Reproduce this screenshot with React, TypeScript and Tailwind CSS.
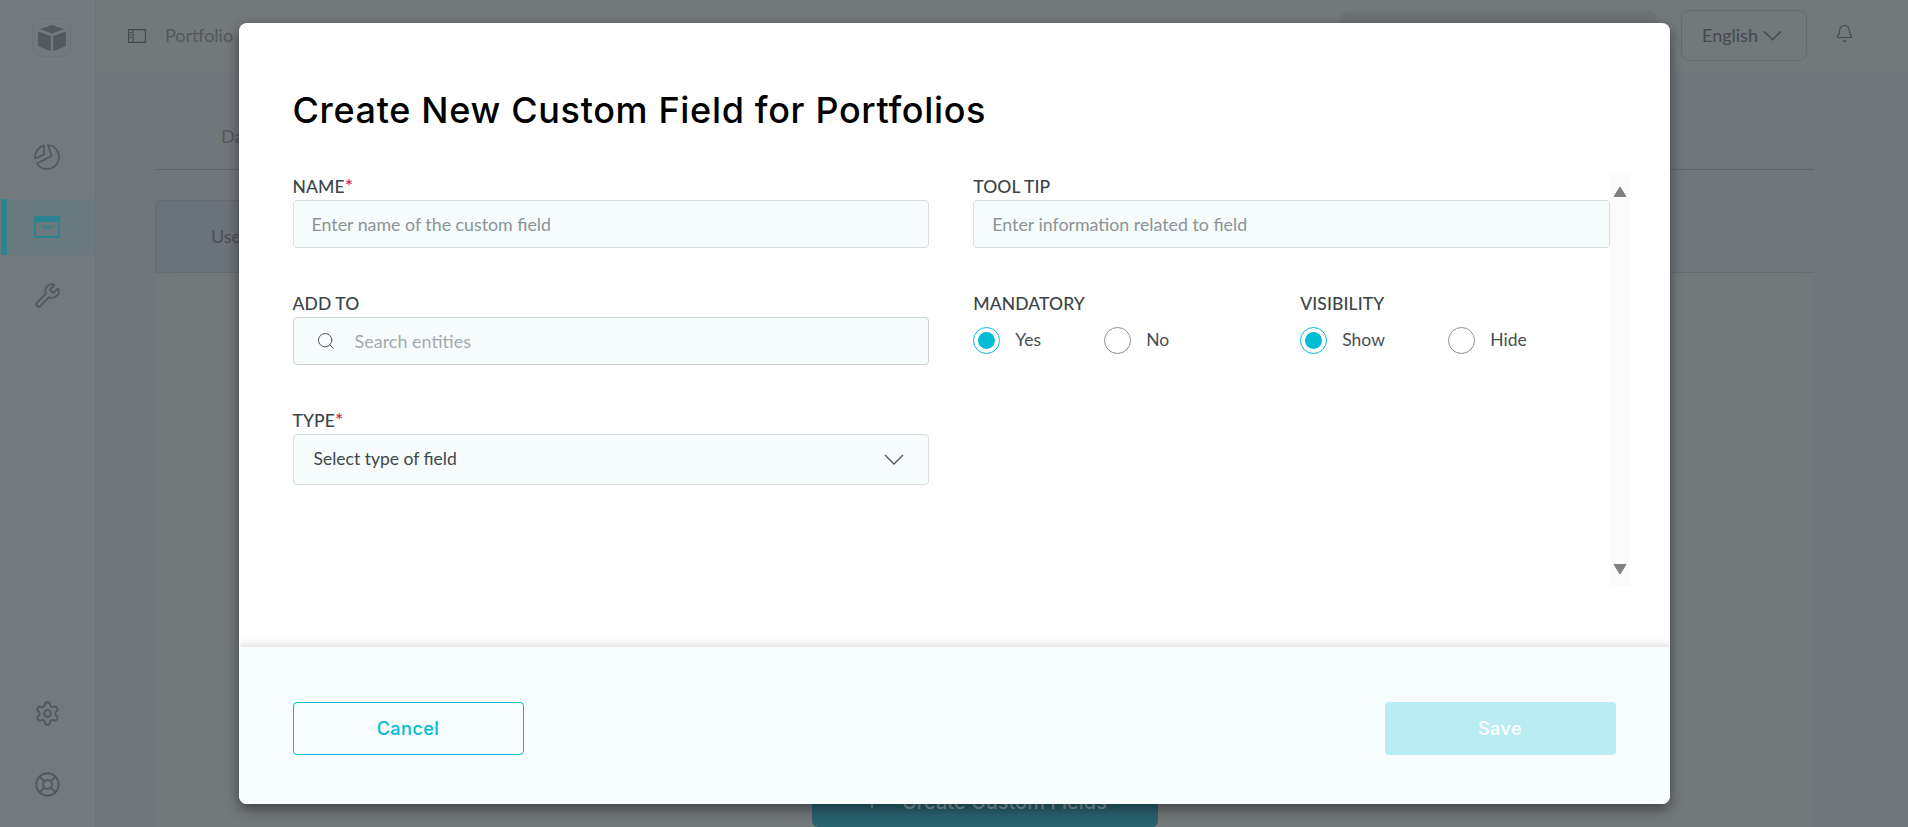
import { Bell, LifeBuoy, Plus, Search, Settings, Wrench } from 'lucide-react'

const lato = "font-['Lato','Liberation_Sans',sans-serif]"
const poppins = "font-['Inter','Liberation_Sans',sans-serif]"

const Chevron = ({ className }: { className: string }) => (
  <svg viewBox="0 0 20 11" fill="none" stroke="currentColor" strokeWidth="1.4" className={className}>
    <path d="M1 1l9 9 9-9" />
  </svg>
)

const Logo = () => (
  <div className="w-[39px] h-[39px] rounded-[10px] border border-[#6d7376] flex items-center justify-center">
    <svg viewBox="0 0 28 26" className="w-[28px] h-[26px]" fill="#54595d">
      <path d="M14 0l12 4.2L14 8.6 2 4.2z" />
      <path d="M0 6.4l12.8 4.6V26L1.6 21.8C.6 21.4 0 20.6 0 19.6z" />
      <path d="M28 6.4l-12.8 4.6V26l11.2-4.2c1-.4 1.6-1.2 1.6-2.2z" />
    </svg>
  </div>
)

const PieIcon = () => (
  <svg viewBox="0 0 26 26" className="w-[26px] h-[26px]" fill="none" stroke="#53585c" strokeWidth="1.7" strokeLinejoin="round">
    <path d="M10 1.4A12 12 0 0 0 1.2 14.5L10 10.5z" />
    <path d="M14 1A12 12 0 1 1 3 19.6L17.5 12z" />
  </svg>
)

const InboxIcon = () => (
  <svg viewBox="0 0 26 22" className="w-[26px] h-[22px]" fill="none">
    <path d="M1 1h24v20H1z" stroke="#2b8490" strokeWidth="1.8" strokeLinejoin="round" />
    <path d="M0 0h26v6H0z" fill="#2b8490" />
    <path d="M9 9.5c0 3 8 3 8 0" stroke="#2b8490" strokeWidth="1.8" />
  </svg>
)

const PanelIcon = () => (
  <svg viewBox="0 0 18 14" className="w-[18px] h-[14px]" fill="none" stroke="#43484c" strokeWidth="1.1">
    <path d="M.6.6h16.8v12.8H.6zM5 .6v12.8M1.5 3.5h2M1.5 6h2M1.5 8.5h2" />
  </svg>
)

const Sidebar = () => (
  <div className="w-[96px] h-full shrink-0 flex flex-col border-r border-[#6d7376] bg-[#73797c]">
    <div className="h-[71px] pl-[32px] pt-[18px]">
      <Logo />
    </div>
    <div className="mt-[73px] pl-[34px]">
      <PieIcon />
    </div>
    <div className="mt-[29px] ml-px h-[56px] flex items-center bg-[#6a787f]">
      <div className="w-[6px] h-full bg-[#2b8490]" />
      <div className="pl-[27px]">
        <InboxIcon />
      </div>
    </div>
    <div className="mt-[27px] pl-[34px] text-[#53585c]">
      <Wrench size={27} strokeWidth={1.6} />
    </div>
    <div className="mt-auto pl-[34px] pb-[29px] flex flex-col gap-[44px] text-[#53585c]">
      <Settings size={27} strokeWidth={1.6} />
      <LifeBuoy size={27} strokeWidth={1.6} />
    </div>
  </div>
)

const Header = () => (
  <div className={`h-[71px] flex items-center bg-[#73787b] ${lato}`}>
    <div className="pl-[32px]">
      <PanelIcon />
    </div>
    <div className="pl-[19px] text-[18px] text-[#54595c]">Portfolio</div>
    <div className="ml-auto mb-[10px] w-[317px] h-[40px] rounded-lg bg-[#6d7275]" />
    <div className="ml-[24px] mb-[1px] pl-[20px] w-[126px] h-[51px] rounded-lg border border-[#656b6e] flex items-center gap-[5px] text-[18px] text-[#43494d]">
      English
      <Chevron className="w-[19px] h-[11px]" />
    </div>
    <div className="pl-[28px] pr-[54px] pb-[5px] text-[#43494d]">
      <Bell size={19} strokeWidth={1.3} />
    </div>
  </div>
)

const Backdrop = () => (
  <div className="flex h-full bg-[#6f777a]">
    <Sidebar />
    <div className="flex-1 flex flex-col min-w-0">
      <Header />
      <div className={`flex-1 flex flex-col ml-[59px] mr-[94px] ${lato}`}>
        <div className="h-[99px] pl-[66px] pt-[52px] border-b border-[#5f6568] text-[18px] text-[#54595c]">Dashboard</div>
        <div className="mt-[30px] h-[73px] flex border-b border-[#656b6e]">
          <div className="w-[240px] pl-[55px] flex items-center border-x border-t border-[#656b6e] rounded-t-md bg-[#6a7379] text-[18px] text-[#4a5054]">
            Used
          </div>
        </div>
        <div className="flex-1 rounded-t-2xl bg-[#73787b] flex items-end justify-center">
          <div className={`w-[346px] h-[50px] rounded-md bg-[#29626f] flex items-center justify-center gap-[20px] text-[20px] font-medium text-[#7f9aa1] ${poppins}`}>
            <Plus size={20} />
            Create Custom Fields
          </div>
        </div>
      </div>
    </div>
  </div>
)

const Label = ({ text, required }: { text: string; required?: boolean }) => (
  <div className={`h-[27px] text-[17.5px] leading-[27px] tracking-[0.1px] font-medium text-[#3c4449] ${lato}`}>
    {text}
    {required ? <span className="text-[#d81b60] text-[20px] leading-none">*</span> : null}
  </div>
)

const TextInput = ({ placeholder }: { placeholder: string }) => (
  <div className="h-[48px] px-[18px] flex items-center rounded border border-[#d8dfe0] bg-[#f6fcfc] text-[17.8px] text-[#8b9396]">
    {placeholder}
  </div>
)

const Radio = ({ label, checked }: { label: string; checked?: boolean }) => (
  <div className="flex items-center gap-[15px] text-[17.5px] text-[#474e52]">
    <div
      className={`w-[27px] h-[27px] rounded-full border flex items-center justify-center ${checked ? 'border-[#00bcd4]' : 'border-[#8b8f92]'}`}
    >
      {checked ? <div className="w-[17px] h-[17px] rounded-full bg-[#00bcd4]" /> : null}
    </div>
    {label}
  </div>
)

const RadioGroup = ({ title, options, columns }: { title: string; options: [string, string]; columns: string }) => (
  <div>
    <Label text={title} />
    <div className={`mt-[10px] grid ${columns}`}>
      <Radio label={options[0]} checked />
      <Radio label={options[1]} />
    </div>
  </div>
)

const Scrollbar = () => (
  <div className="w-[21px] h-[413px] shrink-0 flex flex-col items-center justify-between pt-[13px] pb-[11px] bg-[#fbfbfb]">
    <svg viewBox="0 0 14 11" className="w-[14px] h-[11px]" fill="#808080" stroke="#808080" strokeLinejoin="round">
      <path d="M7 1l6 9.5H1z" />
    </svg>
    <svg viewBox="0 0 14 11" className="w-[14px] h-[11px]" fill="#808080" stroke="#808080" strokeLinejoin="round">
      <path d="M7 10L1 .5h12z" />
    </svg>
  </div>
)

const Modal = () => (
  <div className={`w-[1431px] h-[781px] mt-[23px] flex flex-col rounded-lg overflow-hidden bg-white shadow-[0_5px_14px_rgba(0,0,0,0.45)] ${lato}`}>
    <div className="flex-1 pt-[65px] pl-[54px] pr-[39px]">
      <div className={`h-[44px] text-[36px] leading-[44px] tracking-[0.66px] font-medium text-black ${poppins}`}>
        Create New Custom Field for Portfolios
      </div>
      <div className="mt-[41px] flex">
        <div className="flex-1 grid grid-cols-2 gap-x-[44.5px] content-start">
          <div>
            <Label text="NAME" required />
            <TextInput placeholder="Enter name of the custom field" />
          </div>
          <div>
            <Label text="TOOL TIP" />
            <TextInput placeholder="Enter information related to field" />
          </div>
          <div className="mt-[42px]">
            <Label text="ADD TO" />
            <div className="h-[48px] pl-[22px] flex items-center gap-[19px] rounded border border-[#c9d1d3] bg-[#f6fcfc] text-[18px] text-[#a3aaad]">
              <Search size={20} strokeWidth={1.2} className="text-[#50575b]" />
              Search entities
            </div>
          </div>
          <div className="mt-[42px] grid grid-cols-[327px_1fr]">
            <RadioGroup title="MANDATORY" options={['Yes', 'No']} columns="grid-cols-[131px_1fr]" />
            <RadioGroup title="VISIBILITY" options={['Show', 'Hide']} columns="grid-cols-[148px_1fr]" />
          </div>
          <div className="mt-[42px]">
            <Label text="TYPE" required />
            <div className="h-[51px] pl-[20px] pr-[24px] flex items-center justify-between rounded border border-[#d8dfe0] bg-[#f6fcfc] text-[17.5px] text-[#3f474b]">
              Select type of field
              <Chevron className="w-[20px] h-[11px] text-[#50575b]" />
            </div>
          </div>
        </div>
        <Scrollbar />
      </div>
    </div>
    <div className={`h-[157px] shrink-0 pt-[6px] px-[54px] flex items-center justify-between bg-[#f7fdfd] shadow-[0_-4px_6px_rgba(0,0,0,0.1)] text-[18px] tracking-[0.5px] font-medium ${poppins}`}>
      <div className="w-[231px] h-[53px] rounded border border-[#00bcd4] flex items-center justify-center text-[#00bcd4]">Cancel</div>
      <div className="w-[231px] h-[53px] rounded bg-[#b9ecf3] flex items-center justify-center text-white">Save</div>
    </div>
  </div>
)

export default function App() {
  return (
    <div className="relative w-full h-screen overflow-hidden">
      <Backdrop />
      <div className="absolute inset-0 flex justify-center items-start">
        <Modal />
      </div>
    </div>
  )
}
